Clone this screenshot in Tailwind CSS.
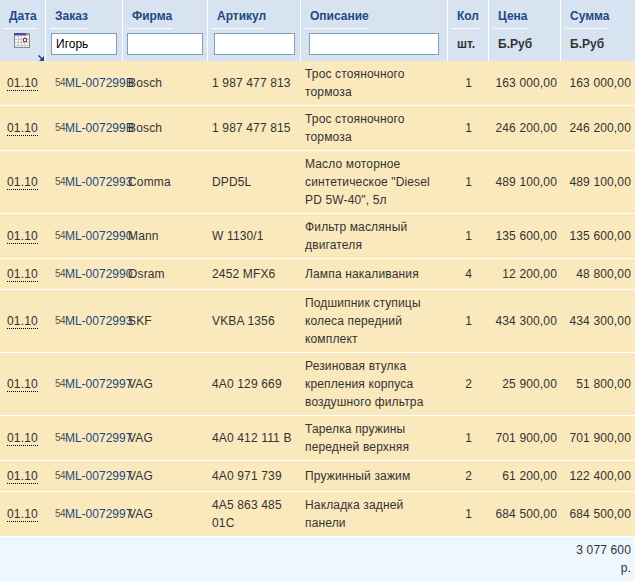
<!DOCTYPE html>
<html><head><meta charset="utf-8"><script src="https://cdn.jsdelivr.net/npm/@tailwindcss/browser@4"></script></head>
<body class="m-0 bg-[#eef6fe] overflow-hidden">
<table class="w-[635px] table-fixed border-separate border-spacing-0 font-['Liberation_Sans',Arial,sans-serif] text-[12px] leading-[18px] text-[#333]">
<colgroup><col class="w-[46px]"><col class="w-[77px]"><col class="w-[85px]"><col class="w-[93px]"><col class="w-[147px]"><col class="w-[41px]"><col class="w-[72px]"><col class="w-[74px]"></colgroup>
<thead class="bg-[#d7e3f0] text-left align-top font-bold">
<tr class="h-[61px]">
<th class="relative border-r border-white pt-[7px] pl-1 font-bold"><span class="inline-block w-[33px] border-b border-white pb-[3px] pl-[5px] text-[#1d4a80]">Дата</span>
<svg class="absolute top-[33px] left-[14px]" width="16" height="16" viewBox="0 0 16 16"><rect x="0.5" y="0.5" width="15" height="14" fill="#f4f4f4" stroke="#8a8a8a"/><rect x="0" y="0" width="12" height="2.5" fill="#4a4aa0"/><rect x="12" y="0" width="4" height="2.5" fill="#999"/><path d="M1 6.500H15M1 9.500H15M1 12.500H15M4.500 3V14M7.500 3V14M10.500 3V14" stroke="#c8c8c8" fill="none"/><rect x="9.500" y="5.500" width="3" height="3" fill="#fff" stroke="#a83030"/></svg>
<svg class="absolute top-[55px] left-[38px]" width="6" height="6" viewBox="0 0 6 6"><path d="M0.500 0.500L4 4" stroke="#1d4a80" stroke-width="1.500" fill="none"/><path d="M6 1V6H1Z" fill="#1d4a80"/></svg></th>
<th class="border-r border-white pt-[7px] pl-1 font-bold"><span class="inline-block w-[39px] border-b border-white pb-[3px] pl-[5px] text-[#1d4a80]">Заказ</span><input value="Игорь" class="mt-1 ml-px block h-[22px] w-[66px] border border-[#7f9db9] bg-white px-[4px] text-[12px] font-normal text-black"></th>
<th class="border-r border-white pt-[7px] pl-1 font-bold"><span class="inline-block w-[45px] border-b border-white pb-[3px] pl-[5px] text-[#1d4a80]">Фирма</span><input class="mt-1 block h-[22px] w-[76px] border border-[#7f9db9] bg-white"></th>
<th class="border-r border-white pt-[7px] pl-1 font-bold"><span class="inline-block w-[52px] border-b border-white pb-[3px] pl-[5px] text-[#1d4a80]">Артикул</span><input class="mt-1 ml-[2px] block h-[22px] w-[81px] border border-[#7f9db9] bg-white"></th>
<th class="border-r border-white pt-[7px] pl-1 font-bold"><span class="inline-block w-[63px] border-b border-white pb-[3px] pl-[5px] text-[#1d4a80]">Описание</span><input class="mt-1 ml-1 block h-[22px] w-[130px] border border-[#7f9db9] bg-white"></th>
<th class="border-r border-white pt-[7px] pl-1 font-bold"><span class="inline-block w-[27px] border-b border-white pb-[3px] pl-[5px] text-[#1d4a80]">Кол</span><div class="mt-[6px] pl-[5px] text-[#333]">шт.</div></th>
<th class="border-r border-white pt-[7px] pl-1 font-bold"><span class="inline-block w-[35px] border-b border-white pb-[3px] pl-[5px] text-[#1d4a80]">Цена</span><div class="mt-[6px] pl-[5px] text-[#333]">Б.Руб</div></th>
<th class="pt-[7px] pl-1 font-bold"><span class="inline-block w-[42px] border-b border-white pb-[3px] pl-[5px] text-[#1d4a80]">Сумма</span><div class="mt-[6px] pl-[5px] text-[#333]">Б.Руб</div></th>
</tr></thead>
<tbody class="bg-[#f9e9bd] tracking-[0.15px] [&_td]:border-b [&_td]:border-white">
<tr class="h-[45px]"><td class="pl-[7px]"><span class="inline-block border-b border-dotted border-black leading-[14px]">01.10</span></td><td class="whitespace-nowrap pl-[9px] tracking-normal text-[#1d4a80]"><span class="align-[1px] text-[10px] leading-none tracking-[-0.6px] text-[#555]">54</span>ML-007299B</td><td class="pl-[5px]">Bosch</td><td class="pl-[4px]">1 987 477 813</td><td class="pl-1 pr-[12px]">Трос стояночного тормоза</td><td class="pr-[17px] text-right">1</td><td class="pr-[4px] text-right">163 000,00</td><td class="pr-[4px] text-right">163 000,00</td></tr>
<tr class="h-[45px]"><td class="pl-[7px]"><span class="inline-block border-b border-dotted border-black leading-[14px]">01.10</span></td><td class="whitespace-nowrap pl-[9px] tracking-normal text-[#1d4a80]"><span class="align-[1px] text-[10px] leading-none tracking-[-0.6px] text-[#555]">54</span>ML-007299B</td><td class="pl-[5px]">Bosch</td><td class="pl-[4px]">1 987 477 815</td><td class="pl-1 pr-[12px]">Трос стояночного тормоза</td><td class="pr-[17px] text-right">1</td><td class="pr-[4px] text-right">246 200,00</td><td class="pr-[4px] text-right">246 200,00</td></tr>
<tr class="h-[63px]"><td class="pl-[7px]"><span class="inline-block border-b border-dotted border-black leading-[14px]">01.10</span></td><td class="whitespace-nowrap pl-[9px] tracking-normal text-[#1d4a80]"><span class="align-[1px] text-[10px] leading-none tracking-[-0.6px] text-[#555]">54</span>ML-0072993</td><td class="pl-[5px]">Comma</td><td class="pl-[4px]">DPD5L</td><td class="pl-1 pr-[12px]">Масло моторное синтетическое "Diesel PD 5W-40", 5л</td><td class="pr-[17px] text-right">1</td><td class="pr-[4px] text-right">489 100,00</td><td class="pr-[4px] text-right">489 100,00</td></tr>
<tr class="h-[45px]"><td class="pl-[7px]"><span class="inline-block border-b border-dotted border-black leading-[14px]">01.10</span></td><td class="whitespace-nowrap pl-[9px] tracking-normal text-[#1d4a80]"><span class="align-[1px] text-[10px] leading-none tracking-[-0.6px] text-[#555]">54</span>ML-0072990</td><td class="pl-[5px]">Mann</td><td class="pl-[4px]">W 1130/1</td><td class="pl-1 pr-[12px]">Фильтр масляный двигателя</td><td class="pr-[17px] text-right">1</td><td class="pr-[4px] text-right">135 600,00</td><td class="pr-[4px] text-right">135 600,00</td></tr>
<tr class="h-[31px]"><td class="pl-[7px]"><span class="inline-block border-b border-dotted border-black leading-[14px]">01.10</span></td><td class="whitespace-nowrap pl-[9px] tracking-normal text-[#1d4a80]"><span class="align-[1px] text-[10px] leading-none tracking-[-0.6px] text-[#555]">54</span>ML-0072990</td><td class="pl-[5px]">Osram</td><td class="pl-[4px]">2452 MFX6</td><td class="pl-1 pr-[12px]">Лампа накаливания</td><td class="pr-[17px] text-right">4</td><td class="pr-[4px] text-right">12 200,00</td><td class="pr-[4px] text-right">48 800,00</td></tr>
<tr class="h-[63px]"><td class="pl-[7px]"><span class="inline-block border-b border-dotted border-black leading-[14px]">01.10</span></td><td class="whitespace-nowrap pl-[9px] tracking-normal text-[#1d4a80]"><span class="align-[1px] text-[10px] leading-none tracking-[-0.6px] text-[#555]">54</span>ML-0072993</td><td class="pl-[5px]">SKF</td><td class="pl-[4px]">VKBA 1356</td><td class="pl-1 pr-[12px]">Подшипник ступицы колеса передний комплект</td><td class="pr-[17px] text-right">1</td><td class="pr-[4px] text-right">434 300,00</td><td class="pr-[4px] text-right">434 300,00</td></tr>
<tr class="h-[63px]"><td class="pl-[7px]"><span class="inline-block border-b border-dotted border-black leading-[14px]">01.10</span></td><td class="whitespace-nowrap pl-[9px] tracking-normal text-[#1d4a80]"><span class="align-[1px] text-[10px] leading-none tracking-[-0.6px] text-[#555]">54</span>ML-0072997</td><td class="pl-[5px]">VAG</td><td class="pl-[4px]">4A0 129 669</td><td class="pl-1 pr-[12px]">Резиновая втулка крепления корпуса воздушного фильтра</td><td class="pr-[17px] text-right">2</td><td class="pr-[4px] text-right">25 900,00</td><td class="pr-[4px] text-right">51 800,00</td></tr>
<tr class="h-[45px]"><td class="pl-[7px]"><span class="inline-block border-b border-dotted border-black leading-[14px]">01.10</span></td><td class="whitespace-nowrap pl-[9px] tracking-normal text-[#1d4a80]"><span class="align-[1px] text-[10px] leading-none tracking-[-0.6px] text-[#555]">54</span>ML-0072997</td><td class="pl-[5px]">VAG</td><td class="pl-[4px]">4A0 412 111 B</td><td class="pl-1 pr-[12px]">Тарелка пружины передней верхняя</td><td class="pr-[17px] text-right">1</td><td class="pr-[4px] text-right">701 900,00</td><td class="pr-[4px] text-right">701 900,00</td></tr>
<tr class="h-[31px]"><td class="pl-[7px]"><span class="inline-block border-b border-dotted border-black leading-[14px]">01.10</span></td><td class="whitespace-nowrap pl-[9px] tracking-normal text-[#1d4a80]"><span class="align-[1px] text-[10px] leading-none tracking-[-0.6px] text-[#555]">54</span>ML-0072997</td><td class="pl-[5px]">VAG</td><td class="pl-[4px]">4A0 971 739</td><td class="pl-1 pr-[12px]">Пружинный зажим</td><td class="pr-[17px] text-right">2</td><td class="pr-[4px] text-right">61 200,00</td><td class="pr-[4px] text-right">122 400,00</td></tr>
<tr class="h-[45px]"><td class="pl-[7px]"><span class="inline-block border-b border-dotted border-black leading-[14px]">01.10</span></td><td class="whitespace-nowrap pl-[9px] tracking-normal text-[#1d4a80]"><span class="align-[1px] text-[10px] leading-none tracking-[-0.6px] text-[#555]">54</span>ML-0072997</td><td class="pl-[5px]">VAG</td><td class="pl-[4px]">4A5 863 485 01C</td><td class="pl-1 pr-[12px]">Накладка задней панели</td><td class="pr-[17px] text-right">1</td><td class="pr-[4px] text-right">684 500,00</td><td class="pr-[4px] text-right">684 500,00</td></tr>
</tbody>
<tfoot class="bg-[#eef6fe] tracking-[0.15px]"><tr><td colspan="7"></td><td class="pt-[4px] pr-[4px] text-right">3 077 600<br>р.</td></tr></tfoot>
</table>
</body></html>
